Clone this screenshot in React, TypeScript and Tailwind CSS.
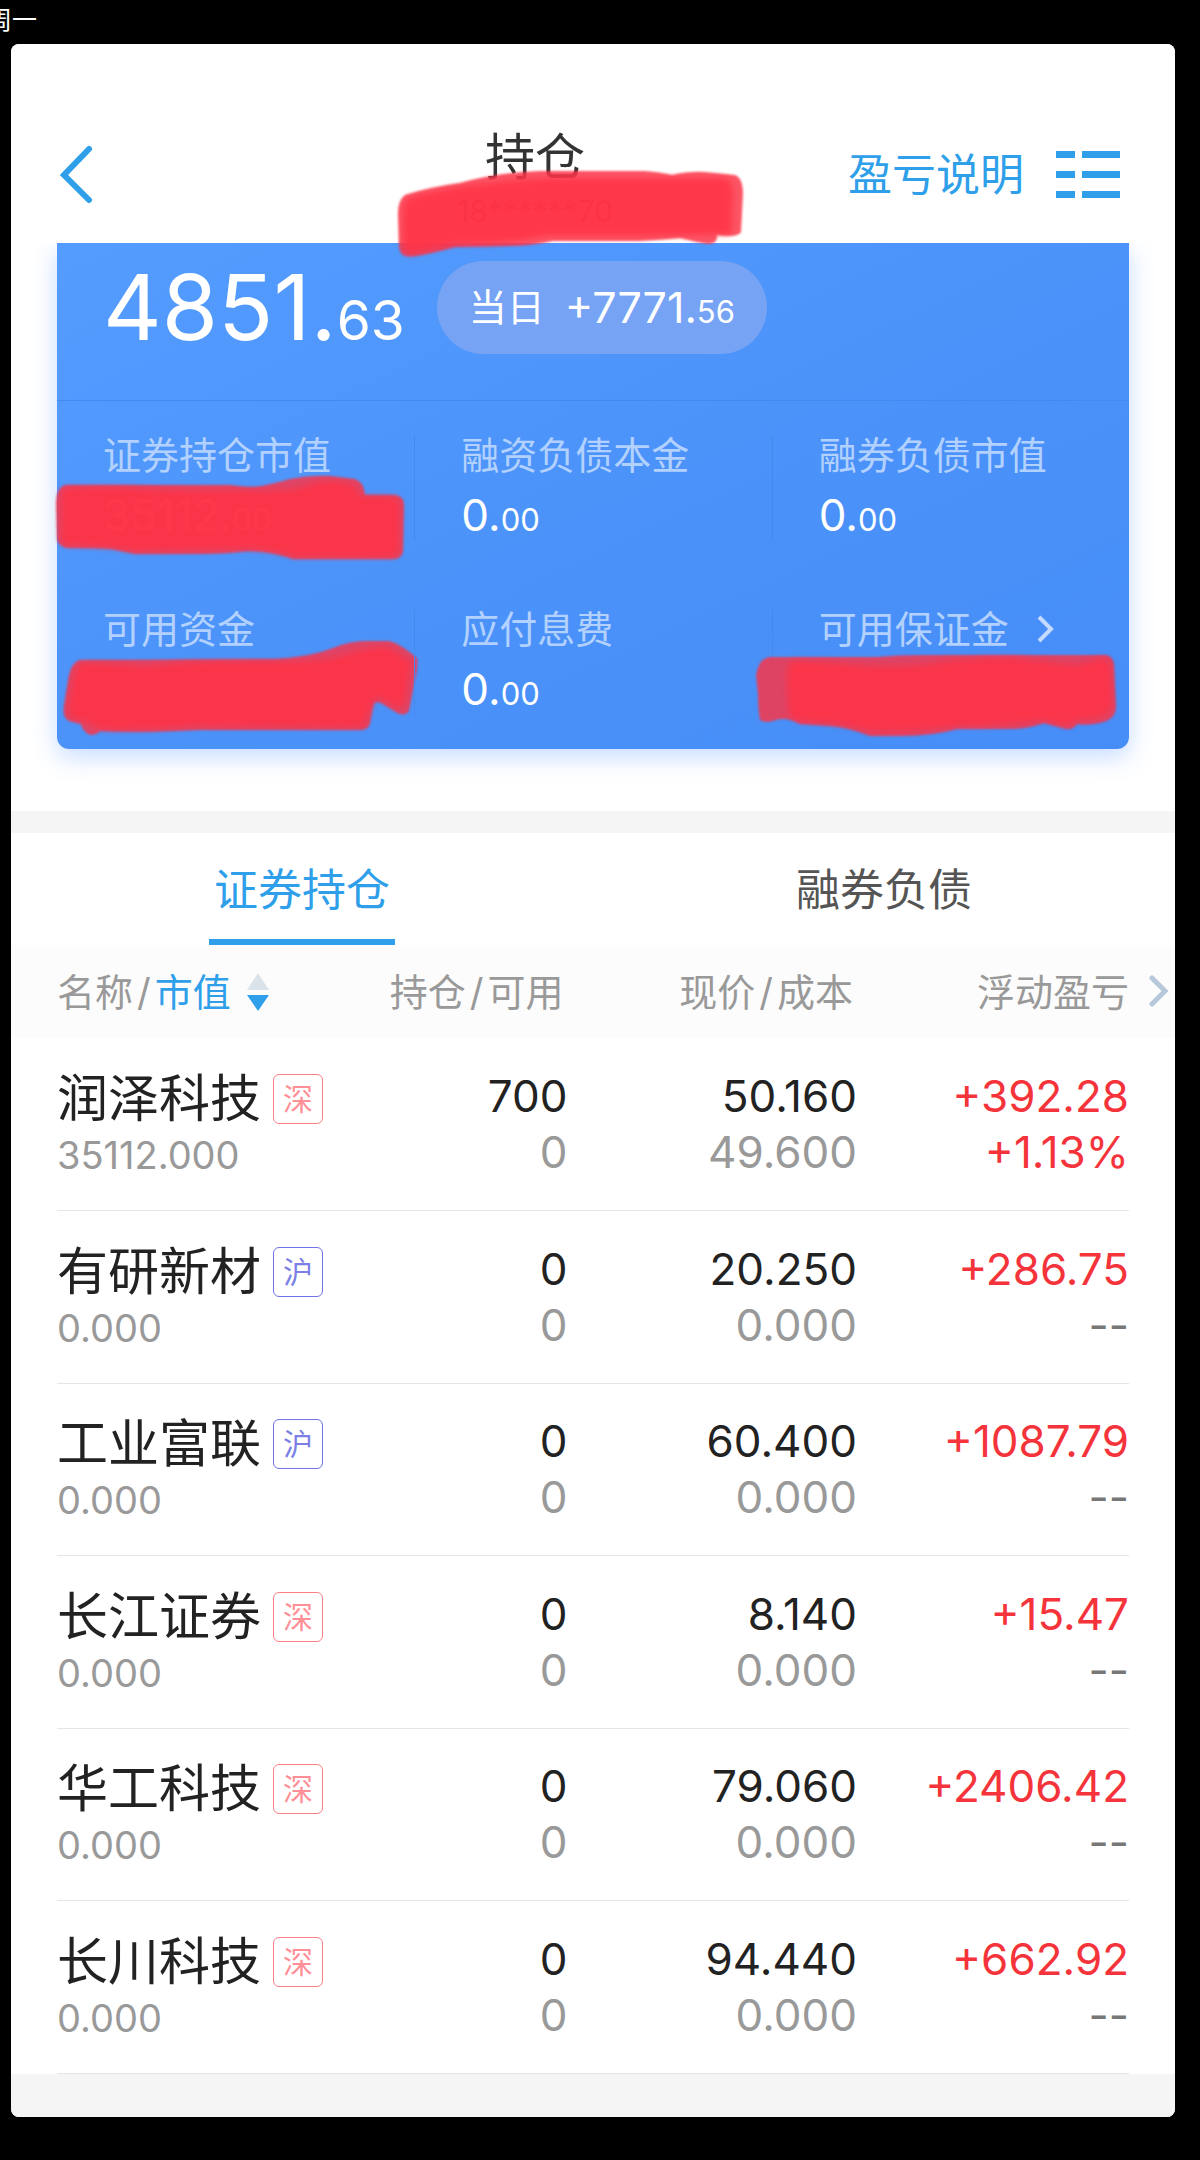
import React from "react";

interface Holding {
  name: string;
  market: "深" | "沪";
  value: string;
  amount: string;
  available: string;
  price: string;
  cost: string;
  profit: string;
  rate: string;
}

interface Stroke {
  className: string;
  viewBox: string;
  outer: string;
  inner: string;
}

interface Stat {
  label: string;
  whole?: string;
  decimal?: string;
  link?: boolean;
  mark?: Stroke;
}

const holdings: Holding[] = [
  { name: "润泽科技", market: "深", value: "35112.000", amount: "700", available: "0", price: "50.160", cost: "49.600", profit: "+392.28", rate: "+1.13%" },
  { name: "有研新材", market: "沪", value: "0.000", amount: "0", available: "0", price: "20.250", cost: "0.000", profit: "+286.75", rate: "--" },
  { name: "工业富联", market: "沪", value: "0.000", amount: "0", available: "0", price: "60.400", cost: "0.000", profit: "+1087.79", rate: "--" },
  { name: "长江证券", market: "深", value: "0.000", amount: "0", available: "0", price: "8.140", cost: "0.000", profit: "+15.47", rate: "--" },
  { name: "华工科技", market: "深", value: "0.000", amount: "0", available: "0", price: "79.060", cost: "0.000", profit: "+2406.42", rate: "--" },
  { name: "长川科技", market: "深", value: "0.000", amount: "0", available: "0", price: "94.440", cost: "0.000", profit: "+662.92", rate: "--" },
];

const titleMark: Stroke = {
  className: "absolute -left-[67px] top-[37px] h-[100px] w-[360px]",
  viewBox: "390 160 360 100",
  outer:
    "M405 191 Q430 183 460 179 Q500 168 540 167 L645 167 Q660 168 672 171 Q690 167 705 168 L735 171 Q743 174 743 190 L741 228 Q738 234 717 231 Q718 240 708 240 Q695 238 680 234 Q660 236 640 237 L553 237 Q530 242 510 242 L455 243 Q430 250 415 252 Q400 255 399 243 L398 210 Q398 196 405 191 Z",
  inner:
    "M408 194 Q450 183 480 180 Q530 174 560 174 L660 174 L725 174 Q733 176 733 190 L731 230 L640 232 L545 232 Q510 240 455 240 L412 250 Q403 250 403 240 L403 206 Q404 197 408 194 Z",
};

const stats: Stat[] = [
  {
    label: "证券持仓市值",
    whole: "35112.",
    decimal: "00",
    mark: {
      className: "absolute -left-[7px] top-[35px] h-[95px] w-[360px]",
      viewBox: "50 470 360 95",
      outer:
        "M66 485 L230 485 Q250 488 262 486 Q280 482 290 479 Q310 475 330 476 L355 479 Q364 482 365 495 L396 495 Q404 497 404 505 L403 552 Q401 559 394 559 L293 559 Q270 551 247 551 Q225 554 200 554 L135 554 Q120 551 112 549 Q95 548 66 548 Q57 545 57 538 L56 505 Q56 487 66 485 Z",
      inner:
        "M66 488 L115 487 Q180 491 235 490 Q280 492 300 488 Q315 481 335 481 L352 484 Q358 489 360 496 L392 497 Q400 498 400 506 L399 550 Q398 557 390 557 L296 557 Q270 549 247 549 L135 551 Q110 546 66 545 Q61 544 61 538 L61 496 Q61 489 66 488 Z",
    },
  },
  { label: "融资负债本金", whole: "0.", decimal: "00" },
  { label: "融券负债市值", whole: "0.", decimal: "00" },
  {
    label: "可用资金",
    mark: {
      className: "absolute -left-[2px] top-[26px] h-[105px] w-[370px]",
      viewBox: "55 635 370 105",
      outer:
        "M80 660 L275 659 Q310 657 333 648 Q350 641 365 641 L388 641 Q398 642 417 658 Q418 668 415 680 L409 711 Q404 718 394 711 L381 703 Q374 700 373 706 L370 724 Q368 730 360 730 L200 730 Q140 733 100 731 Q97 735 90 735 Q82 731 81 724 L69 721 Q62 718 64 705 L69 675 Q72 662 80 660 Z",
      inner:
        "M84 663 L150 666 Q180 662 215 662 L285 662 Q320 662 345 655 Q375 645 390 648 L411 662 L404 705 Q398 711 390 703 L376 696 L366 720 Q365 727 357 727 L190 726 Q140 731 100 729 L90 723 L74 719 Q67 716 69 702 L74 674 Q77 664 84 663 Z",
    },
  },
  { label: "应付息费", whole: "0.", decimal: "00" },
  {
    label: "可用保证金",
    link: true,
    mark: {
      className: "absolute -left-[23px] top-[41px] h-[90px] w-[372px]",
      viewBox: "748 650 372 90",
      outer:
        "M768 657 L875 657 Q895 655 920 655 L1104 655 Q1111 656 1112 665 L1114 708 Q1113 720 1098 723 Q1085 726 1075 724 Q1072 730 1064 729 L1042 723 Q1025 729 1010 729 L955 729 Q930 736 900 736 L868 736 Q845 727 828 726 L798 724 Q785 717 774 720 Q764 724 758 720 Q756 710 756 695 L754 675 Q757 658 768 657 Z",
      inner:
        "M792 661 L830 663 Q870 668 920 665 Q960 658 1010 658 Q1040 662 1075 665 L1102 658 Q1108 659 1109 670 L1110 705 Q1108 715 1096 718 L1075 720 L1064 726 L1042 720 Q1000 726 955 726 Q900 733 868 731 Q840 722 798 721 Q786 718 786 705 L785 672 Q787 662 792 661 Z",
    },
  },
];

const Scribble: React.FC<{ mark: Stroke }> = ({ mark }) => (
  <svg className={`${mark.className} pointer-events-none max-w-none overflow-visible`} viewBox={mark.viewBox} aria-hidden="true">
    <path d={mark.outer} fill="#fb3548" fillOpacity="0.84" className="blur-[1px]" />
    <path d={mark.inner} fill="#ff3245" fillOpacity="0.85" className="blur-[3px]" />
  </svg>
);

const Slash = () => <span className="px-1">/</span>;

const Header = () => (
  <header className="relative z-10 flex h-[199px] items-center bg-white pt-[63px] pl-[46px] pr-[54px]">
    <button type="button" aria-label="返回" className="w-[165px]">
      <svg width="36" height="60" viewBox="0 0 36 60" fill="none" stroke="#2f9fea" strokeWidth="6" strokeLinecap="round" strokeLinejoin="miter">
        <path d="M32 4 L7 30 L32 55" />
      </svg>
    </button>
    <div className="flex flex-1 justify-center">
      <div className="relative mt-2 flex flex-col items-center">
        <h1 className="text-[50px] leading-[60px] text-[#333]">持仓</h1>
        <p className="mt-1 text-[30px] leading-10 text-[#333]">18******70</p>
        <Scribble mark={titleMark} />
      </div>
    </div>
    <a href="#help" className="text-[44px] leading-[60px] text-[#2f9fea]">盈亏说明</a>
    <button type="button" aria-label="菜单" className="ml-8">
      <svg width="65" height="48" viewBox="0 0 65 48" fill="#2f9fea">
        <path d="M0 0h19v7H0z M26 0h38v7H26z M0 20h19v7H0z M26 20h38v7H26z M0 40h19v7H0z M26 40h38v7H26z" />
      </svg>
    </button>
  </header>
);

const SummaryCard = () => (
  <section className="mx-[46px] rounded-b-xl bg-linear-to-br from-[#549cfe] via-[#4b93f9] to-[#468df8] pb-[34px] text-white shadow-[0_8px_24px_rgba(70,140,255,0.3)]">
    <div className="flex h-[158px] items-start gap-8 border-b border-[#4489eb] pt-[18px] pl-[46px]">
      <p className="text-[91px] leading-[93px]">
        4851.<span className="text-[55px]">63</span>
      </p>
      <p className="flex h-[93px] items-center gap-5 rounded-full bg-[#76a3f4] px-8 text-[38px]">
        <span>当日</span>
        <span className="text-[43px]">
          +7771.<span className="text-[31px]">56</span>
        </span>
      </p>
    </div>
    <div className="grid grid-cols-3 gap-y-[68px] pt-[34px]">
      {stats.map((stat, i) => (
        <div
          key={stat.label}
          className={`relative h-[106px] pl-[46px] ${i % 3 ? "border-l border-[#4489eb]" : ""}`}
        >
          <div className="flex items-center gap-7 text-[38px] leading-10 text-[#b3d1fe]">
            {stat.label}
            {stat.link && (
              <svg width="18" height="28" viewBox="0 0 18 28" fill="none" stroke="#c4dbff" strokeWidth="4">
                <path d="M2 2 L14 14 L2 26" />
              </svg>
            )}
          </div>
          {stat.whole && (
            <p className="mt-3 text-[44px] leading-[56px]">
              {stat.whole}
              <span className="text-[31px]">{stat.decimal}</span>
            </p>
          )}
          {stat.mark && <Scribble mark={stat.mark} />}
        </div>
      ))}
    </div>
  </section>
);

const Tabs = () => (
  <nav className="grid h-28 grid-cols-2 text-[44px]">
    <button type="button" className="flex justify-center text-[#2f9fea]">
      <span className="flex h-full items-center border-b-6 border-[#2f9fea] px-[5px] pt-2">证券持仓</span>
    </button>
    <button type="button" className="pt-[2px] text-[#555]">融券负债</button>
  </nav>
);

const HoldingsTable = () => (
  <div className="flex items-start bg-linear-to-b from-[#fcfcfc] from-[93px] to-white to-[93px] pl-[46px]">
    <table className="flex-1 table-fixed border-collapse text-right text-[44px] leading-[56px]">
      <thead>
        <tr className="h-[93px] text-[38px] text-[#999]">
          <th className="w-[28%] text-left font-normal">
            <button type="button" className="flex items-center whitespace-nowrap">
              名称
              <Slash />
              <span className="text-[#2f9fea]">市值</span>
              <svg className="ml-4" width="22" height="38" viewBox="0 0 22 38">
                <path d="M11 0 L22 17 H0 Z" fill="#dbe3ea" />
                <path d="M0 22 H22 L11 38 Z" fill="#2f9fea" />
              </svg>
            </button>
          </th>
          <th className="pr-2 font-normal">持仓<Slash />可用</th>
          <th className="w-[27%] pr-2 font-normal">现价<Slash />成本</th>
          <th className="w-[25%] font-normal">浮动盈亏</th>
        </tr>
      </thead>
      <tbody>
        {holdings.map((row) => (
          <tr key={row.name} className="border-b border-[#e6e6e6] odd:h-[172px] even:h-[173px]">
            <td className="pt-[6px] text-left">
              <div className="flex items-center gap-3 whitespace-nowrap text-[51px] text-[#222]">
                {row.name}
                <span
                  className={`flex size-[50px] items-center justify-center rounded-md border text-[30px] ${
                    row.market === "深" ? "border-[#ff7f86] text-[#ff8f96]" : "border-[#6f74e8] text-[#7b7fe6]"
                  }`}
                >
                  {row.market}
                </span>
              </div>
              <div className="text-[38px] text-[#999]">{row.value}</div>
            </td>
            <td className="pr-1">
              <div className="text-[#222]">{row.amount}</div>
              <div className="text-[#999]">{row.available}</div>
            </td>
            <td className="pr-1">
              <div className="text-[#222]">{row.price}</div>
              <div className="text-[#999]">{row.cost}</div>
            </td>
            <td className="text-[#f5333b]">
              <div>{row.profit}</div>
              <div className={row.rate === "--" ? "text-[#777]" : ""}>{row.rate}</div>
            </td>
          </tr>
        ))}
      </tbody>
    </table>
    <button type="button" aria-label="更多列" className="flex h-[93px] w-[46px] items-center justify-end pr-[6px]">
      <svg width="20" height="33" viewBox="0 0 20 33" fill="none" stroke="#b7c8da" strokeWidth="5" strokeLinecap="round">
        <path d="M3 3 L16 16 L3 29" />
      </svg>
    </button>
  </div>
);

const App: React.FC = () => {
  return (
    <div className="min-h-screen overflow-hidden bg-black pr-[25px] pb-11 pl-[11px] font-[Inter,'Noto_Sans_CJK_SC',sans-serif]">
      <div className="-ml-6 h-11 text-[25px] leading-10 text-white">周一</div>
      <main className="overflow-hidden rounded-lg bg-white">
        <Header />
        <SummaryCard />
        <div className="mt-[62px] h-[22px] bg-[#f5f5f5]" />
        <Tabs />
        <HoldingsTable />
        <div className="h-[43px] bg-[#f5f5f5]" />
      </main>
    </div>
  );
};

export default App;
